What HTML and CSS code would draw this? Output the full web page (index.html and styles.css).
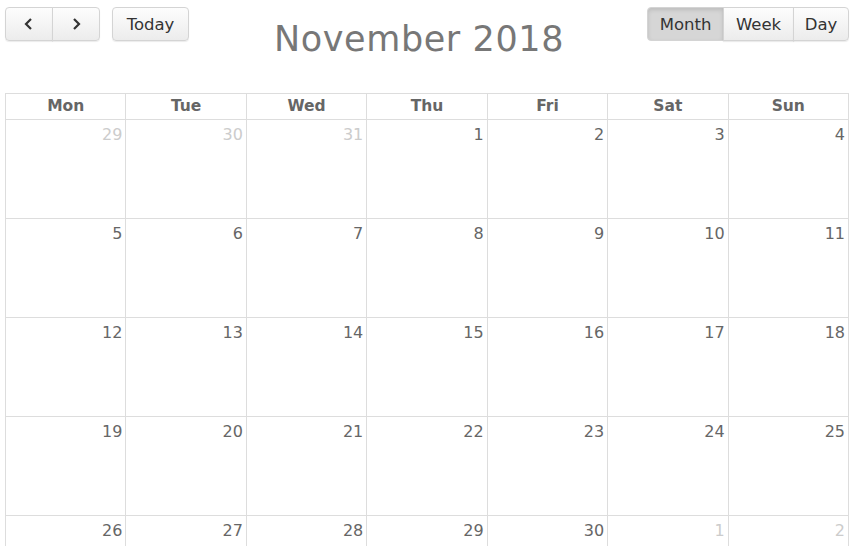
FILE: index.html
```html
<!DOCTYPE html>
<html>
<head>
<meta charset="utf-8">
<link rel="stylesheet" href="styles.css">
</head>
<body>
<div class="cal">
  <div class="toolbar">
    <div class="left">
      <div class="btn-group">
        <button class="btn nav"><svg width="12" height="14" viewBox="0 0 12 14"><path d="M8 2 L3 7 L8 12" fill="none" stroke="#333" stroke-width="2.2"/></svg></button>
        <button class="btn nav"><svg width="12" height="14" viewBox="0 0 12 14"><path d="M4 2 L9 7 L4 12" fill="none" stroke="#333" stroke-width="2.2"/></svg></button>
      </div>
      <button class="btn today">Today</button>
    </div>
    <h2 class="title">November 2018</h2>
    <div class="btn-group views">
      <button class="btn active">Month</button>
      <button class="btn">Week</button>
      <button class="btn">Day</button>
    </div>
  </div>
  <div class="grid">
    <div class="head">Mon</div><div class="head">Tue</div><div class="head">Wed</div><div class="head">Thu</div><div class="head">Fri</div><div class="head">Sat</div><div class="head">Sun</div>
    <div class="day other">29</div><div class="day other">30</div><div class="day other">31</div><div class="day">1</div><div class="day">2</div><div class="day">3</div><div class="day">4</div>
    <div class="day">5</div><div class="day">6</div><div class="day">7</div><div class="day">8</div><div class="day">9</div><div class="day">10</div><div class="day">11</div>
    <div class="day">12</div><div class="day">13</div><div class="day">14</div><div class="day">15</div><div class="day">16</div><div class="day">17</div><div class="day">18</div>
    <div class="day">19</div><div class="day">20</div><div class="day">21</div><div class="day">22</div><div class="day">23</div><div class="day">24</div><div class="day">25</div>
    <div class="day">26</div><div class="day">27</div><div class="day">28</div><div class="day">29</div><div class="day">30</div><div class="day other">1</div><div class="day other">2</div>
  </div>
</div>
</body>
</html>
```
FILE: styles.css
```css
html, body {
  margin: 0;
  padding: 0;
  background: #fff;
  overflow: hidden;
}
body {
  font-family: "DejaVu Sans", sans-serif;
  color: #666;
}
.cal {
  padding: 7px 1px 0 5px;
}
.toolbar {
  display: flex;
  align-items: flex-start;
  height: 86px;
}
.left {
  display: flex;
  gap: 12px;
  width: 184px;
}
.btn-group {
  display: flex;
}
.btn {
  height: 34px;
  border: 1px solid #d4d4d4;
  background: linear-gradient(#fdfdfd, #ececec);
  font-family: "DejaVu Sans", sans-serif;
  font-size: 16.5px;
  color: #333;
  padding: 0 11px;
  margin: 0;
  border-radius: 0;
  box-shadow: 0 1px 1px rgba(0,0,0,0.08);
  display: flex;
  align-items: center;
  justify-content: center;
}
.btn-group .btn + .btn {
  margin-left: -1px;
}
.btn-group .btn:first-child {
  border-radius: 4px 0 0 4px;
}
.btn-group .btn:last-child {
  border-radius: 0 4px 4px 0;
}
.nav {
  width: 48px;
  padding: 0;
}
.today {
  width: 77px;
  border-radius: 4px;
}
.views .btn:nth-child(1) { width: 77px; }
.views .btn:nth-child(2) { width: 71px; }
.views .btn:nth-child(3) { width: 56px; }
.btn.active {
  background: #d6d6d6;
  box-shadow: inset 0 2px 4px rgba(0,0,0,0.12);
}
.title {
  flex: 1;
  text-align: center;
  margin: 12px 0 0 0;
  padding-left: 2px;
  font-weight: normal;
  font-size: 35px;
  color: #777;
  letter-spacing: 0.6px;
}
.grid {
  display: grid;
  grid-template-columns: repeat(7, 1fr);
  grid-template-rows: 26px repeat(5, 99px);
  border-top: 1px solid #ddd;
  border-left: 1px solid #ddd;
}
.head, .day {
  border-right: 1px solid #ddd;
  border-bottom: 1px solid #ddd;
}
.head {
  text-align: center;
  font-weight: bold;
  font-size: 15.5px;
  line-height: 25px;
  color: #666;
}
.day {
  text-align: right;
  font-size: 16px;
  padding: 5px 3px 0 0;
  color: #666;
}
.day.other {
  color: #ccc;
}
```
